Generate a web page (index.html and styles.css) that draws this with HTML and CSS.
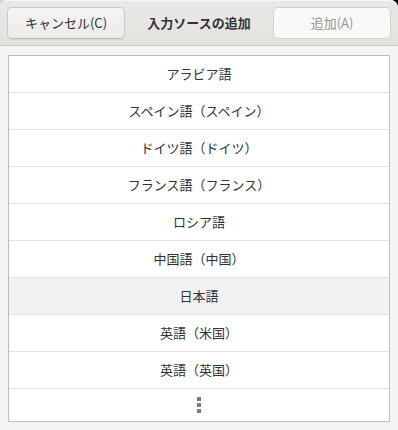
FILE: index.html
```html
<!DOCTYPE html>
<html lang="ja">
<head>
<meta charset="utf-8">
<link rel="stylesheet" href="styles.css">
</head>
<body>
<div class="window">
  <header class="headerbar">
    <button class="btn">キャンセル(C)</button>
    <div class="title">入力ソースの追加</div>
    <button class="btn disabled">追加(A)</button>
  </header>
  <main class="content">
    <ul class="list">
      <li class="row">アラビア語</li>
      <li class="row">スペイン語（スペイン）</li>
      <li class="row">ドイツ語（ドイツ）</li>
      <li class="row">フランス語（フランス）</li>
      <li class="row">ロシア語</li>
      <li class="row">中国語（中国）</li>
      <li class="row selected">日本語</li>
      <li class="row">英語（米国）</li>
      <li class="row">英語（英国）</li>
      <li class="row more"><span class="dots"><i></i><i></i><i></i></span></li>
    </ul>
  </main>
</div>
</body>
</html>
```
FILE: styles.css
```css
html {
  background: linear-gradient(to right, #d4d4d4 50%, #000 50%);
}
body {
  margin: 0;
  font-family: "Noto Sans CJK JP", "Noto Sans", sans-serif;
  font-size: 13px;
  color: #2e3436;
}
.window {
  width: 398px;
  height: 430px;
  background: #f6f5f4;
  border-radius: 8px 8px 0 0;
  overflow: hidden;
  display: flex;
  flex-direction: column;
}
.headerbar {
  height: 46px;
  box-sizing: border-box;
  padding: 7px 7px 6px;
  display: flex;
  align-items: flex-start;
  justify-content: space-between;
  background: linear-gradient(#ebe9e7, #e4e2df);
  border-bottom: 1px solid #c9c4bf;
  box-shadow: inset 0 1px #f8f7f6;
}
.btn {
  width: 118px;
  height: 32px;
  box-sizing: border-box;
  font: inherit;
  color: #2e3436;
  background: linear-gradient(#f5f4f3, #edebe9);
  border: 1px solid #cdc7c2;
  border-bottom-color: #bfb8b1;
  border-radius: 5px;
  box-shadow: 0 1px rgba(0,0,0,0.05);
  padding: 0;
  line-height: 30px;
}
.btn.disabled {
  color: #929595;
  background: #faf9f8;
  border-color: #d5d0cc;
  box-shadow: none;
}
.title {
  font-weight: bold;
  line-height: 32px;
  color: #2e3436;
}
.content {
  flex: 1;
  padding: 9px 8px;
}
.list {
  list-style: none;
  margin: 0;
  padding: 0;
  background: #fff;
  border: 1px solid #c0bcb6;
}
.row {
  height: 37px;
  box-sizing: border-box;
  border-bottom: 1px solid #e4e4e4;
  display: flex;
  align-items: center;
  justify-content: center;
  padding-bottom: 1px;
}
.row.selected {
  background: #f2f2f2;
}
.row.more {
  height: 32px;
  border-bottom: none;
}
.dots {
  display: flex;
  flex-direction: column;
  gap: 2px;
}
.dots i {
  display: block;
  width: 4px;
  height: 4px;
  background: #7b7b7b;
}
```
